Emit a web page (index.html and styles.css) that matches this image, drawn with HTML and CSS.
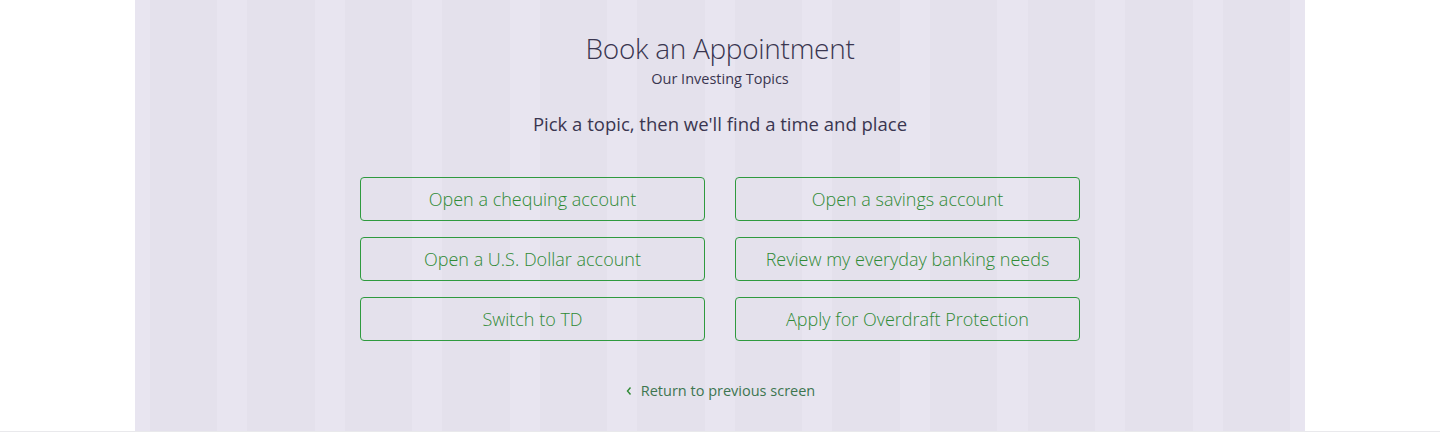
FILE: index.html
```html
<!DOCTYPE html>
<html lang="en">
<head>
<meta charset="utf-8">
<title>Book an Appointment</title>
<link rel="stylesheet" href="styles.css">
</head>
<body>
<div class="page">
  <main class="container">
    <header class="heading">
      <h1 class="title">Book an Appointment</h1>
      <p class="subtitle">Our Investing Topics</p>
    </header>
    <p class="prompt">Pick a topic, then we'll find a time and place</p>
    <div class="topics">
      <a class="topic" href="#">Open a chequing account</a>
      <a class="topic" href="#">Open a savings account</a>
      <a class="topic" href="#">Open a U.S. Dollar account</a>
      <a class="topic" href="#">Review my everyday banking needs</a>
      <a class="topic" href="#">Switch to TD</a>
      <a class="topic" href="#">Apply for Overdraft Protection</a>
    </div>
    <a class="back" href="#"><svg class="chev" width="8" height="10" viewBox="0 0 8 10" aria-hidden="true"><path d="M5.5 1.5 L2.5 5 L5.5 8.5" fill="none" stroke="currentColor" stroke-width="1.4"/></svg><span>Return to previous screen</span></a>
  </main>
  <div class="rule"></div>
</div>
</body>
</html>
```
FILE: styles.css
```css
* { box-sizing: border-box; }
html, body { margin: 0; padding: 0; background: #ffffff; }
body {
  font-family: "Open Sans", "Noto Sans", "Liberation Sans", sans-serif;
  color: #3b3850;
}
.page {
  display: flex;
  flex-direction: column;
  height: 432px;
}
.container {
  width: 1170px;
  margin: 0 auto;
  flex: 1;
  display: flex;
  flex-direction: column;
  align-items: center;
  padding-top: 29px;
  background-color: #e8e5f0;
  background-image: repeating-linear-gradient(to right,
    #e8e5f0 0, #e8e5f0 15px,
    #e4e1ec 15px, #e4e1ec 82.5px,
    #e8e5f0 82.5px, #e8e5f0 97.5px);
}
.heading { text-align: center; }
.title {
  margin: 0;
  font-size: 28px;
  font-weight: 300;
  line-height: 38px;
  color: #3a3650;
  letter-spacing: -0.3px;
}
.subtitle {
  margin: 2px 0 0;
  font-size: 14.5px;
  line-height: 20px;
  color: #3a3650;
}
.prompt {
  margin: 22px 0 0;
  font-size: 18.5px;
  line-height: 26px;
  color: #3a3650;
}
.topics {
  margin-top: 40px;
  width: 720px;
  display: grid;
  grid-template-columns: 1fr 1fr;
  column-gap: 30px;
  row-gap: 16px;
}
.topic {
  display: flex;
  align-items: center;
  justify-content: center;
  height: 44px;
  border: 1px solid #2f9a3f;
  border-radius: 4px;
  color: #2f8a35;
  font-size: 18px;
  font-weight: 300;
  text-decoration: none;
}
.back {
  margin-top: 40px;
  display: flex;
  align-items: center;
  gap: 8px;
  color: #3d7650;
  font-size: 14.5px;
  text-decoration: none;
}
.chev { color: #2f8a35; }
.rule {
  height: 1px;
  background: #e9e9ec;
}
```
